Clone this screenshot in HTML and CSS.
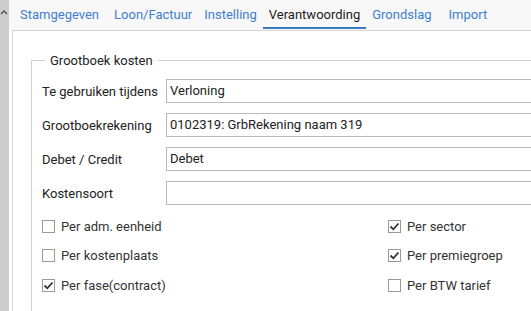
FILE: index.html
```html
<!DOCTYPE html>
<html>
<head>
<meta charset="utf-8">
<link rel="stylesheet" href="styles.css">
</head>
<body>
<div class="app">
  <div class="scroll">
    <svg class="scroll-arrow" width="8" height="8" viewBox="0 0 8 8"><path d="M1 6 L4 3 L7 6" fill="none" stroke="#555" stroke-width="1.4"/></svg>
  </div>
  <div class="main">
    <nav class="tabs">
      <span class="tab wide">Stamgegeven</span>
      <span class="tab">Loon/Factuur</span>
      <span class="tab">Instelling</span>
      <span class="tab active">Verantwoording</span>
      <span class="tab wider">Grondslag</span>
      <span class="tab">Import</span>
    </nav>
    <div class="panel">
      <fieldset class="group">
        <legend class="legend">Grootboek kosten</legend>
        <div class="rows">
          <div class="row"><span class="label">Te gebruiken tijdens</span><div class="input">Verloning</div></div>
          <div class="row"><span class="label">Grootboekrekening</span><div class="input">0102319: GrbRekening naam 319</div></div>
          <div class="row"><span class="label">Debet / Credit</span><div class="input">Debet</div></div>
          <div class="row"><span class="label">Kostensoort</span><div class="input"></div></div>
        </div>
        <div class="checks">
          <div class="col">
            <label class="check"><span class="box"></span>Per adm. eenheid</label>
            <label class="check"><span class="box"></span>Per kostenplaats</label>
            <label class="check"><span class="box checked"><svg viewBox="0 0 11 11" width="11" height="11"><path d="M1.5 5.5 L4.3 8.3 L9.5 2.5" fill="none" stroke="#333" stroke-width="1.8"/></svg></span>Per fase(contract)</label>
          </div>
          <div class="col right">
            <label class="check"><span class="box checked"><svg viewBox="0 0 11 11" width="11" height="11"><path d="M1.5 5.5 L4.3 8.3 L9.5 2.5" fill="none" stroke="#333" stroke-width="1.8"/></svg></span>Per sector</label>
            <label class="check"><span class="box checked"><svg viewBox="0 0 11 11" width="11" height="11"><path d="M1.5 5.5 L4.3 8.3 L9.5 2.5" fill="none" stroke="#333" stroke-width="1.8"/></svg></span>Per premiegroep</label>
            <label class="check"><span class="box"></span>Per BTW tarief</label>
          </div>
        </div>
      </fieldset>
    </div>
  </div>
</div>
</body>
</html>
```
FILE: styles.css
```css
html, body {
  margin: 0;
  padding: 0;
  background: #fff;
  overflow: hidden;
}
body {
  font-family: Roboto, "Liberation Sans", sans-serif;
  font-size: 13px;
  color: #222;
  width: 531px;
  height: 311px;
}
.app {
  display: flex;
  height: 311px;
  overflow: hidden;
}
.scroll {
  width: 9px;
  flex: none;
  background: #cdcdcd;
  position: relative;
}
.scroll-arrow {
  position: absolute;
  left: 0;
  top: 8px;
}
.main {
  flex: 1;
  min-width: 0;
  display: flex;
  flex-direction: column;
  background: #fff;
  overflow: hidden;
}
.tabs {
  display: flex;
  height: 30px;
  padding-left: 5px;
  background: #f8f8f8;
  box-sizing: border-box;
}
.tab {
  padding: 0 6px;
  line-height: 29px;
  color: #3f7fcf;
  white-space: nowrap;
  border-bottom: 2px solid transparent;
  box-sizing: border-box;
  height: 30px;
}
.tab.wide {
  margin-right: 3px;
}
.tab.wider {
  margin-right: 5px;
}
.tab.active {
  color: #1b1b1b;
  border-bottom-color: #3a78c2;
  height: 29px;
}
.panel {
  flex: 1;
  margin-left: 3px;
  border-left: 1px solid #d4d4d4;
  border-top: 1px solid #d4d4d4;
  padding: 22px 0 0 18px;
  min-width: 0;
}
.group {
  margin: 0;
  border: 1px solid #d0d0d0;
  border-right: none;
  padding: 11px 0 0 10px;
  min-width: 0;
  height: 260px;
  width: 600px;
  box-sizing: border-box;
}
.legend {
  padding: 0 5px;
  margin-left: 3px;
  color: #222;
}
.rows {
  display: flex;
  flex-direction: column;
  gap: 10px;
}
.row {
  display: flex;
  align-items: center;
  height: 24px;
}
.label {
  width: 124px;
  flex: none;
  white-space: nowrap;
}
.input {
  flex: 1;
  height: 24px;
  box-sizing: border-box;
  border: 1px solid #b9b9b9;
  padding: 0 3px;
  line-height: 22px;
  white-space: nowrap;
}
.checks {
  display: flex;
  margin-top: 12px;
}
.col {
  display: flex;
  flex-direction: column;
  gap: 11.5px;
  width: 346px;
  flex: none;
}
.check {
  display: flex;
  align-items: center;
  height: 18px;
  color: #333;
  white-space: nowrap;
}
.box {
  width: 13px;
  height: 13px;
  box-sizing: border-box;
  border: 1px solid #9a9a9a;
  margin-right: 6px;
  display: flex;
  align-items: center;
  justify-content: center;
  background: #fff;
  flex: none;
}
.box svg {
  display: block;
}
```
